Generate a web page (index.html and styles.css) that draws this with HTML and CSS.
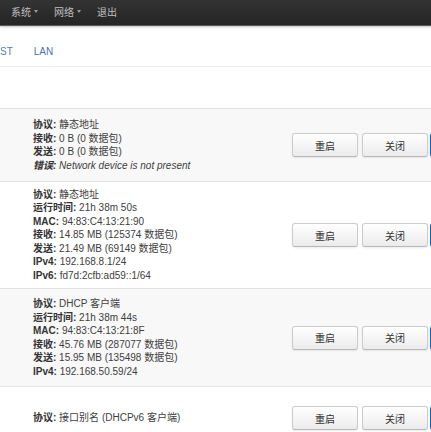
FILE: index.html
```html
<!DOCTYPE html>
<html lang="zh-CN">
<head>
<meta charset="utf-8">
<title>接口</title>
<link rel="stylesheet" href="styles.css">
</head>
<body>
<div class="page">
  <header class="navbar">
    <a class="nav-item">系统<span class="caret"></span></a>
    <a class="nav-item">网络<span class="caret"></span></a>
    <a class="nav-item">退出</a>
  </header>
  <nav class="tabs">
    <a class="tab tab-cut">ST</a>
    <a class="tab">LAN</a>
  </nav>
  <div class="spacer"></div>
  <div class="list">
    <div class="row row-odd row-1">
      <div class="info">
        <div><b>协议:</b> 静态地址</div>
        <div><b>接收:</b> 0 B (0 数据包)</div>
        <div><b>发送:</b> 0 B (0 数据包)</div>
        <div class="err"><b>错误:</b> Network device is not present</div>
      </div>
      <div class="actions">
        <button class="btn">重启</button>
        <button class="btn">关闭</button>
        <button class="btn btn-primary" aria-label="编辑"></button>
      </div>
    </div>
    <div class="row row-2">
      <div class="info">
        <div><b>协议:</b> 静态地址</div>
        <div><b>运行时间:</b> 21h 38m 50s</div>
        <div><b>MAC:</b> 94:83:C4:13:21:90</div>
        <div><b>接收:</b> 14.85 MB (125374 数据包)</div>
        <div><b>发送:</b> 21.49 MB (69149 数据包)</div>
        <div><b>IPv4:</b> 192.168.8.1/24</div>
        <div><b>IPv6:</b> fd7d:2cfb:ad59::1/64</div>
      </div>
      <div class="actions">
        <button class="btn">重启</button>
        <button class="btn">关闭</button>
        <button class="btn btn-primary" aria-label="编辑"></button>
      </div>
    </div>
    <div class="row row-odd row-3">
      <div class="info">
        <div><b>协议:</b> DHCP 客户端</div>
        <div><b>运行时间:</b> 21h 38m 44s</div>
        <div><b>MAC:</b> 94:83:C4:13:21:8F</div>
        <div><b>接收:</b> 45.76 MB (287077 数据包)</div>
        <div><b>发送:</b> 15.95 MB (135498 数据包)</div>
        <div><b>IPv4:</b> 192.168.50.59/24</div>
      </div>
      <div class="actions">
        <button class="btn">重启</button>
        <button class="btn">关闭</button>
        <button class="btn btn-primary" aria-label="编辑"></button>
      </div>
    </div>
    <div class="row row-4">
      <div class="info">
        <div><b>协议:</b> 接口别名 (DHCPv6 客户端)</div>
      </div>
      <div class="actions">
        <button class="btn">重启</button>
        <button class="btn">关闭</button>
        <button class="btn btn-primary" aria-label="编辑"></button>
      </div>
    </div>
  </div>
</div>
</body>
</html>
```

FILE: styles.css
```css
html, body {
  margin: 0;
  padding: 0;
  background: #ffffff;
  overflow: hidden;
}
body {
  width: 431px;
  height: 432px;
  font-family: "Liberation Sans", "Noto Sans CJK SC", sans-serif;
  font-size: 10px;
  color: #404040;
}
.page {
  width: 520px;
}
.navbar {
  height: 26px;
  box-sizing: border-box;
  display: flex;
  align-items: center;
  padding: 0 0 3px 11px;
  gap: 16px;
  background: linear-gradient(#333333, #252525);
  border-bottom: 1px solid #5a5a5a;
  box-shadow: 0 1px 2px rgba(0,0,0,0.25);
}
.nav-item {
  color: #bfbfbf;
  font-size: 10px;
  display: flex;
  align-items: center;
  gap: 3px;
}
.caret {
  width: 0;
  height: 0;
  border-left: 2.5px solid transparent;
  border-right: 2.5px solid transparent;
  border-top: 3px solid #9a9a9a;
  margin-top: 1px;
}
.tabs {
  height: 41px;
  box-sizing: border-box;
  display: flex;
  align-items: flex-end;
  gap: 21px;
  padding-bottom: 8px;
  border-bottom: 1px solid #ececec;
}
.tab {
  color: #4a77a8;
  font-size: 10px;
  line-height: 12px;
}
.tab-cut {
  color: #5a7fa8;
}
.spacer {
  height: 41px;
}
.row {
  display: flex;
  align-items: center;
  border-top: 1px solid #e3e3e3;
  background: #ffffff;
}
.row-odd {
  background: #f8f8f8;
}
.row-1 { height: 72px; }
.row-2 { height: 106px; }
.row-3 { height: 97px; }
.row-4 { height: 62px; }
.info {
  flex: 0 0 259px;
  padding-left: 33px;
  line-height: 13.5px;
  color: #404040;
}
.info b {
  font-weight: bold;
  color: #333333;
}
.err {
  font-style: italic;
}
.actions {
  display: flex;
  gap: 4px;
}
.btn {
  width: 66px;
  height: 24px;
  padding: 0;
  font-family: "Liberation Sans", "Noto Sans CJK SC", sans-serif;
  font-size: 10px;
  color: #333333;
  background: linear-gradient(#ffffff, #ebebeb);
  border: 1px solid #cccccc;
  border-bottom-color: #b8b8b8;
  border-radius: 3px;
  box-shadow: inset 0 1px 0 rgba(255,255,255,0.3), 0 1px 2px rgba(0,0,0,0.08);
}
.btn-primary {
  background: linear-gradient(#049cdb, #0064cd);
  border-color: #0064cd #0064cd #003f81;
  margin-left: -2px;
}
```
